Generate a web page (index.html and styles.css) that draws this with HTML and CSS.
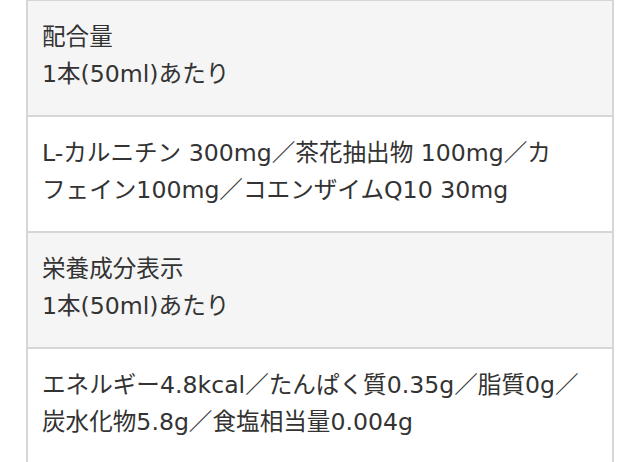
FILE: index.html
```html
<!DOCTYPE html>
<html lang="ja">
<head>
<meta charset="utf-8">
<link rel="stylesheet" href="styles.css">
</head>
<body>
<table class="spec">
  <tr class="head"><td>配合量<br>1本(50ml)あたり</td></tr>
  <tr class="body"><td>L-カルニチン 300mg／茶花抽出物 100mg／カ<br>フェイン100mg／コエンザイムQ10 30mg</td></tr>
  <tr class="head"><td>栄養成分表示<br>1本(50ml)あたり</td></tr>
  <tr class="body"><td>エネルギー4.8kcal／たんぱく質0.35g／脂質0g／<br>炭水化物5.8g／食塩相当量0.004g</td></tr>
</table>
</body>
</html>
```
FILE: styles.css
```css
html, body {
  margin: 0;
  padding: 0;
  background: #ffffff;
}
.spec {
  width: 588px;
  margin: -1px auto 0;
  border-collapse: collapse;
  font-family: "DejaVu Sans", "Noto Sans CJK JP", sans-serif;
  font-size: 23.6px;
  line-height: 37px;
  color: #333333;
}
.spec td {
  border: 2px solid #d6d6d6;
  padding: 18px 8px 22px 14px;
  text-align: left;
  vertical-align: top;
  white-space: nowrap;
}
.spec .head td {
  background: #f5f5f5;
}
.spec .body td {
  background: #ffffff;
}
```
